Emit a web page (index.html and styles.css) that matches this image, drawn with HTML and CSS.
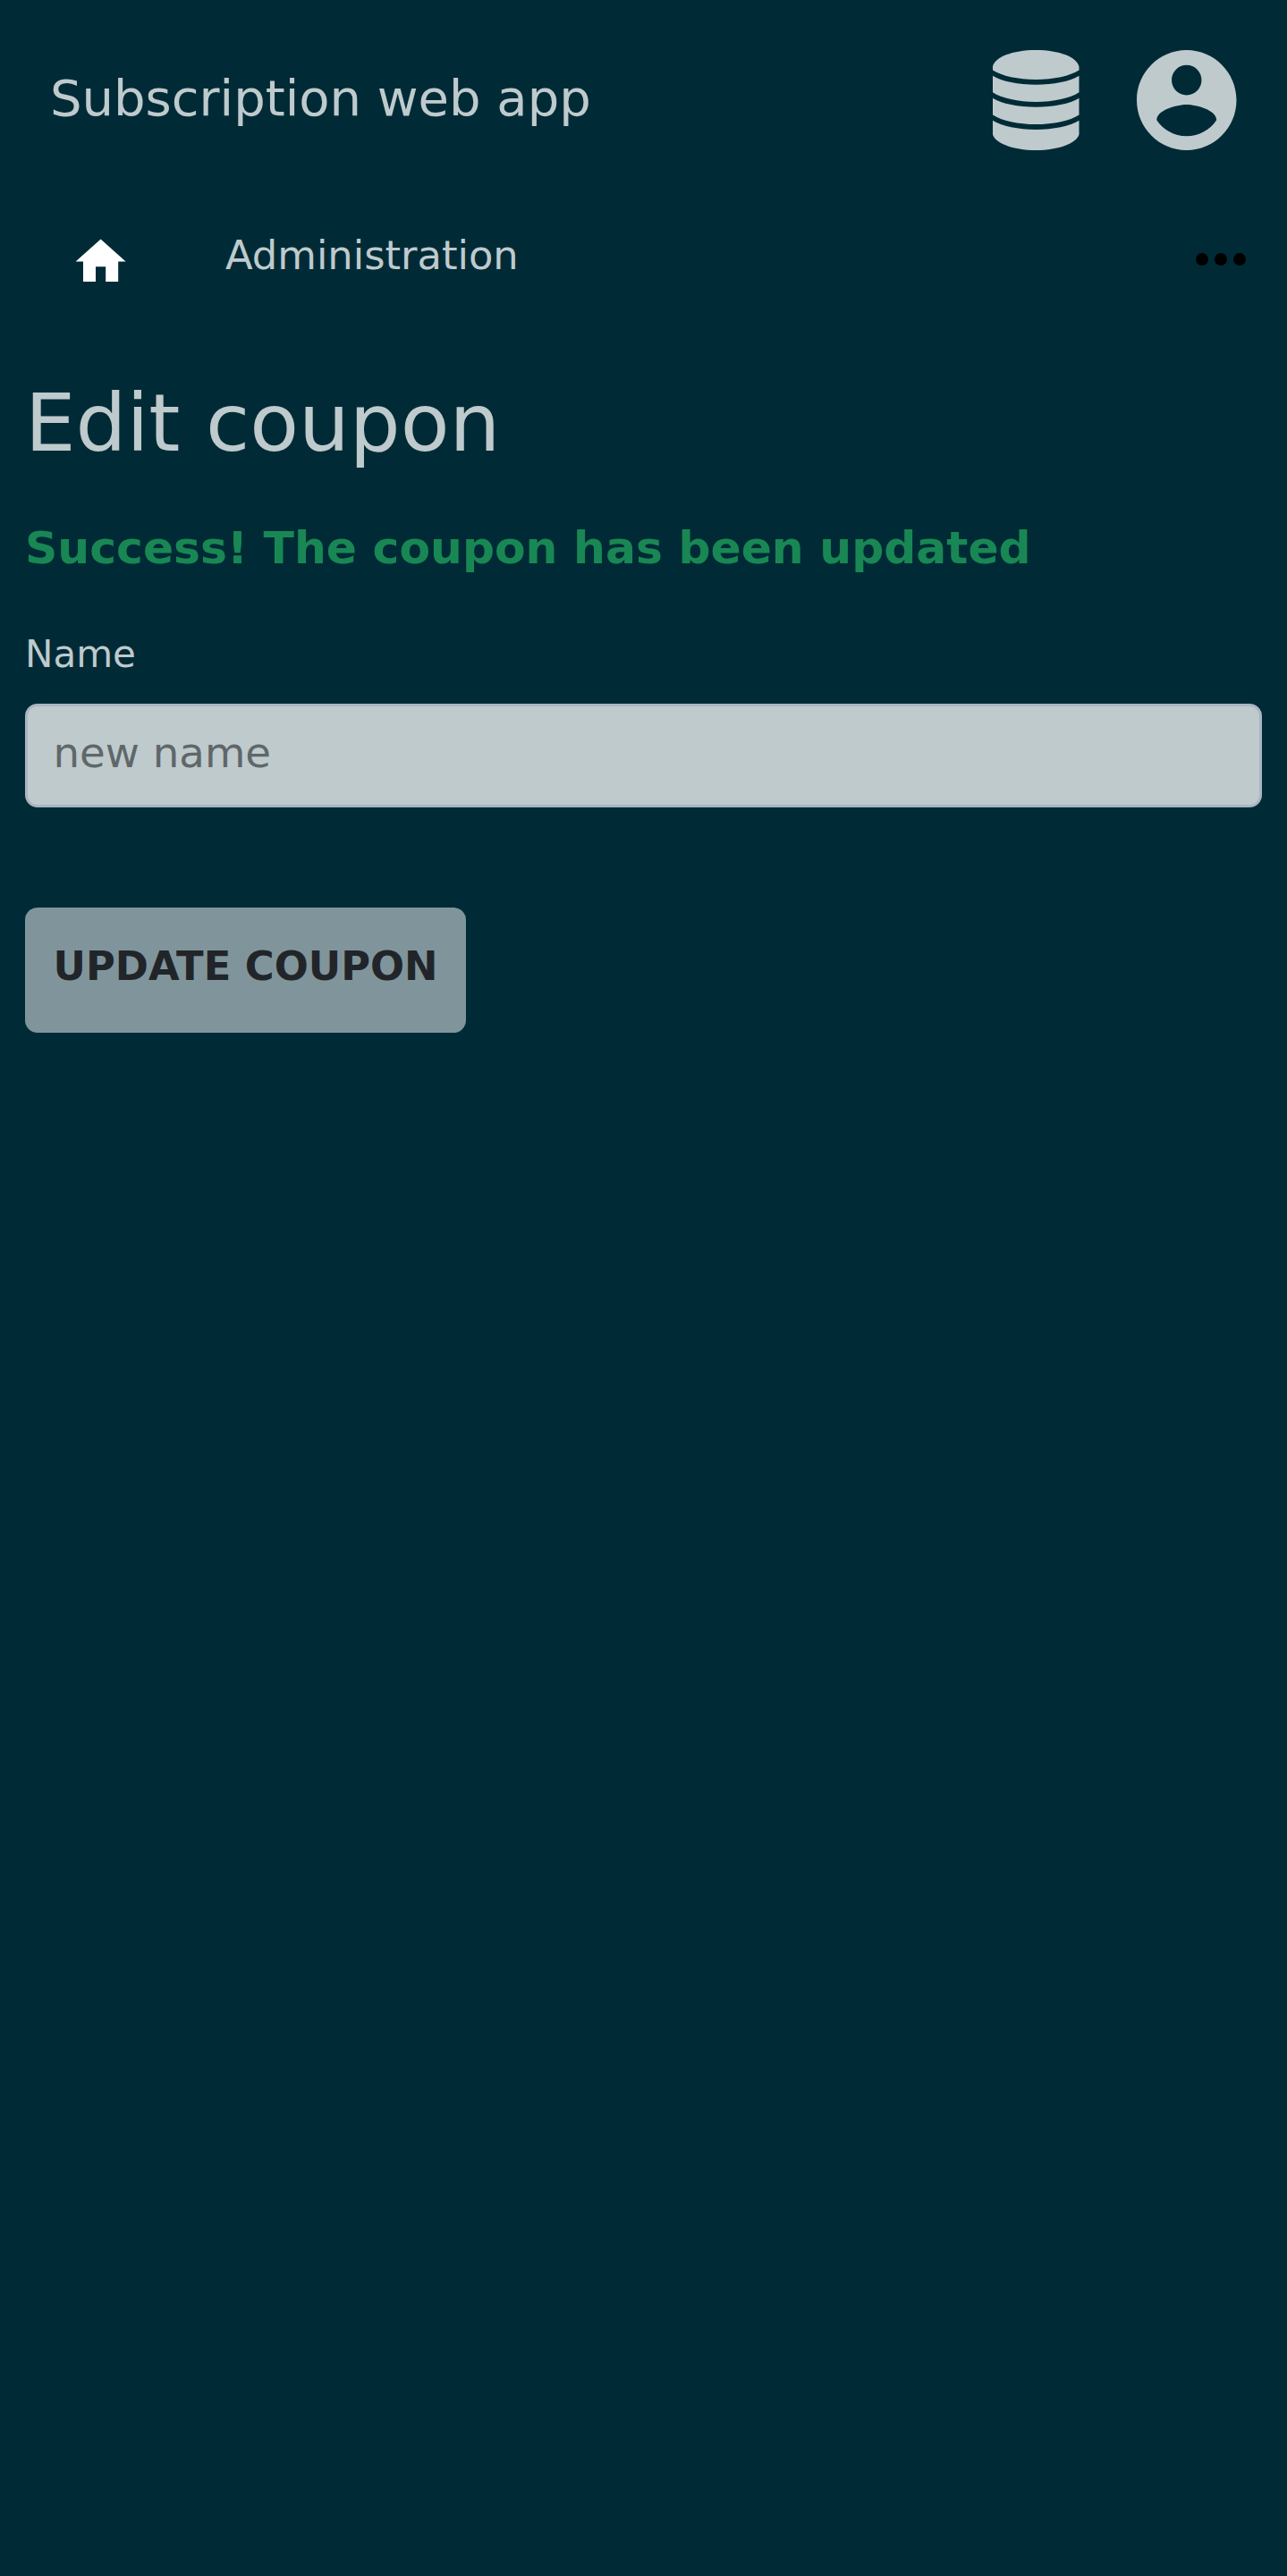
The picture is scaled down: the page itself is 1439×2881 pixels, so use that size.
FILE: index.html
```html
<!DOCTYPE html>
<html lang="en">
<head>
<meta charset="utf-8">
<title>Subscription web app</title>
<link rel="stylesheet" href="styles.css">
</head>
<body>
<header class="topbar">
  <span class="brand">Subscription web app</span>
  <svg class="icon-db" viewBox="0 0 97 112" preserveAspectRatio="none"><path d="M0 18.500C2 8 22 0 48.500 0S95 8 97 18.500V22.500C87 29 68 32.900 48.500 32.900S10 29 0 22.500ZM0 28.700C10 35 29 38.700 48.500 38.700S87 35 97 28.700V47.300C87 54 68 57.900 48.500 57.900S10 54 0 47.300ZM0 53.800C10 60 29 63.800 48.500 63.800S87 60 97 53.800V72.400C87 79 68 83 48.500 83S10 79 0 72.400ZM0 78.800C10 85 29 89 48.500 89S87 85 97 78.800V94.500C94 104 75 112 48.500 112S3 104 0 94.500Z"/></svg>
  <svg class="icon-user" viewBox="2 2 20 20" preserveAspectRatio="none"><path d="M12 2C6.480 2 2 6.480 2 12s4.480 10 10 10 10-4.480 10-10S17.520 2 12 2zm0 3c1.660 0 3 1.340 3 3s-1.340 3-3 3-3-1.340-3-3 1.340-3 3-3zm0 14.200c-2.500 0-4.710-1.280-6-3.220.030-1.990 4-3.080 6-3.080 1.990 0 5.970 1.090 6 3.080-1.290 1.940-3.500 3.220-6 3.220z"/></svg>
</header>
<nav class="nav">
  <svg class="icon-home" viewBox="0 0 24 24"><path d="M10 20v-6h4v6h5v-8h3L12 3 2 12h3v8z"/></svg>
  <a class="nav-link">Administration</a>
  <svg class="icon-more" viewBox="4 10 16 4"><circle cx="6" cy="12" r="2"/><circle cx="12" cy="12" r="2"/><circle cx="18" cy="12" r="2"/></svg>
</nav>
<main class="content">
  <h1 class="title">Edit coupon</h1>
  <p class="success">Success! The coupon has been updated</p>
  <form class="form">
    <label class="label" for="name">Name</label>
    <input class="input" id="name" type="text" placeholder="new name">
    <button class="button" type="button">UPDATE COUPON</button>
  </form>
</main>
</body>
</html>
```
FILE: styles.css
```css
* { box-sizing: border-box; }
html { background: #002b36; }
body { margin: 0; color: #bfcacd; font-family: "DejaVu Sans", sans-serif; }
svg { display: block; flex: none; }
.topbar { display: flex; align-items: center; height: 224px; padding: 0 56.500px 0 56px; fill: #bfcacd; }
.brand { flex: 1; font-size: 56px; line-height: 66px; padding-bottom: 4px; }
.icon-db { width: 96.500px; height: 112px; margin-right: 64.500px; }
.icon-user { width: 111.500px; height: 112px; }
.nav { display: flex; align-items: flex-start; height: 140px; padding: 34.600px 46px 0 78.700px; }
.icon-home { width: 67.200px; height: 67.200px; fill: #fff; }
.nav-link { flex: 1; margin-left: 106.100px; font-size: 44.800px; line-height: 54px; }
.icon-more { width: 56px; height: 14px; margin-top: 24.700px; fill: #000; }
.content { padding: 56px 28px 0; }
.title { margin: 0; font-size: 89.600px; font-weight: 400; line-height: 106px; }
.success { margin: 56px 0 0; font-size: 50.400px; font-weight: 700; line-height: 61px; color: #198754; }
.form { display: flex; flex-direction: column; align-items: flex-start; margin-top: 63px; }
.label { font-size: 42px; line-height: 51px; }
.input { width: 100%; height: 115.700px; margin: 30.300px 0 0; padding: 0 28.500px 6px; border: 3px solid #a9b6c2; border-radius: 14px; background: #bfcacc; font: 46.667px "DejaVu Sans", sans-serif; }
.input::placeholder { color: #5f676a; opacity: 1; }
.button { height: 140px; margin: 112px 0 0; padding: 0 31.500px 9px; border: 0; border-radius: 14px; background: #80959b; color: #212529; font: 700 44.800px "DejaVu Sans", sans-serif; }
```
